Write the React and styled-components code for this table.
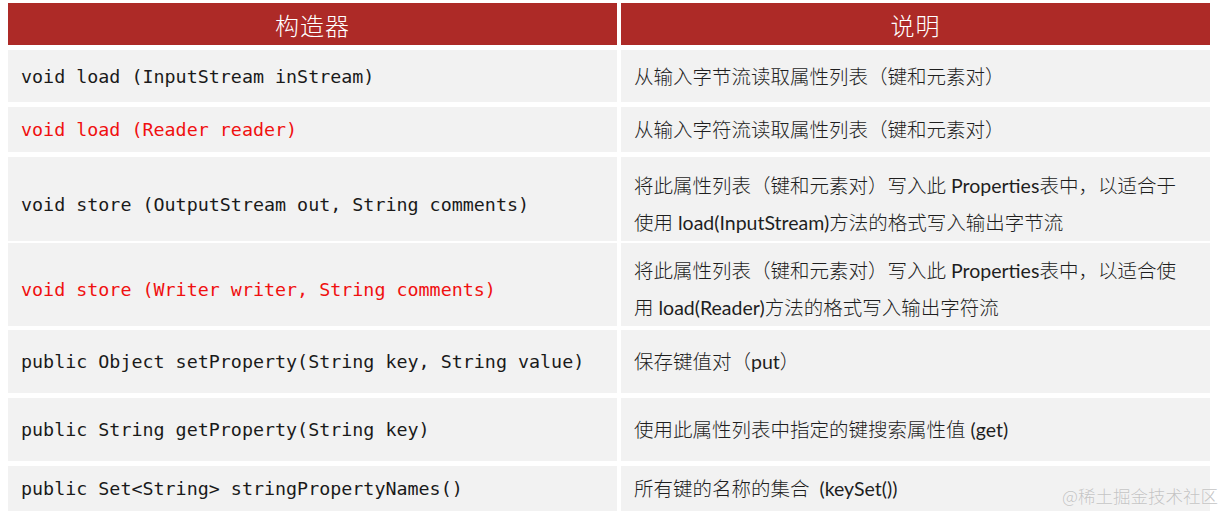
import React from "react";
import styled, { createGlobalStyle } from "styled-components";

const GlobalStyle = createGlobalStyle`
  html, body {
    margin: 0;
    padding: 0;
    background: #ffffff;
  }
  body {
    width: 1225px;
    height: 516px;
    overflow: hidden;
  }
`;

const Page = styled.div`
  position: relative;
  padding: 3px 0 0 8px;
  height: 516px;
  box-sizing: border-box;
`;

const Table = styled.div`
  display: flex;
  flex-direction: column;
  gap: 5px;
  width: 1202px;
`;

const Row = styled.div`
  display: grid;
  grid-template-columns: 609px 589px;
  column-gap: 4px;
  height: ${(p) => p.$h}px;
`;

const HeadCell = styled.div`
  display: flex;
  align-items: center;
  justify-content: center;
  background: #ad2a27;
  color: #ffffff;
  font-family: "Noto Sans CJK SC", sans-serif;
  font-size: 24px;
  font-weight: 300;
  letter-spacing: 1px;
`;

const Cell = styled.div`
  display: flex;
  align-items: center;
  background: #f2f2f2;
  padding: ${(p) => p.$shift || 0}px 0 0 13px;
  box-sizing: border-box;
`;

const Code = styled.span`
  font-family: "DejaVu Sans Mono", "Liberation Mono", monospace;
  font-size: 18.35px;
  color: ${(p) => (p.$red ? "#f01010" : "#1a1a1a")};
  white-space: pre;
`;

const Desc = styled.span`
  font-family: Lato, "Noto Sans CJK SC", sans-serif;
  font-size: 19.5px;
  font-weight: 300;
  line-height: 37px;
  color: #1e1e1e;
  white-space: pre;
`;

const Latin = styled.span`
  font-weight: 400;
`;

const Watermark = styled.div`
  position: absolute;
  right: 7px;
  bottom: 8px;
  font-family: "Noto Sans CJK SC", sans-serif;
  font-size: 17.5px;
  font-weight: 300;
  color: #c4c4c4;
  text-shadow: 0 0 1px #ffffff;
`;

const rows = [
  { h: 52, code: "void load (InputStream inStream)", desc: ["从输入字节流读取属性列表（键和元素对）"] },
  { h: 45, red: true, code: "void load (Reader reader)", desc: ["从输入字符流读取属性列表（键和元素对）"] },
  {
    h: 81,
    shift: 10,
    code: "void store (OutputStream out, String comments)",
    desc: ["将此属性列表（键和元素对）写入此 Properties表中，以适合于", "使用 load(InputStream)方法的格式写入输出字节流"],
  },
  {
    h: 82,
    shift: 9,
    red: true,
    code: "void store (Writer writer, String comments)",
    desc: ["将此属性列表（键和元素对）写入此 Properties表中，以适合使", "用 load(Reader)方法的格式写入输出字符流"],
  },
  { h: 63, code: "public Object setProperty(String key, String value)", desc: ["保存键值对（put）"] },
  { h: 63, code: "public String getProperty(String key)", desc: ["使用此属性列表中指定的键搜索属性值 (get)"] },
  { h: 45, code: "public Set<String> stringPropertyNames()", desc: ["所有键的名称的集合  (keySet())"] },
];

// latin runs get the regular weight, like Calibri next to the light CJK face
function renderLine(line) {
  return line.split(/([\x20-\x7e]+)/).map((part, k) =>
    /^[\x20-\x7e]+$/.test(part) ? <Latin key={k}>{part}</Latin> : part
  );
}

export default function App() {
  return (
    <>
      <GlobalStyle />
      <Page>
        <Table>
          <Row $h={42}>
            <HeadCell>构造器</HeadCell>
            <HeadCell>说明</HeadCell>
          </Row>
          {rows.map((r, i) => (
            <Row key={i} $h={r.h}>
              <Cell $shift={r.shift}>
                <Code $red={r.red}>{r.code}</Code>
              </Cell>
              <Cell $shift={r.shift}>
                <Desc>
                  {r.desc.map((line, j) => (
                    <React.Fragment key={j}>
                      {j > 0 && <br />}
                      {renderLine(line)}
                    </React.Fragment>
                  ))}
                </Desc>
              </Cell>
            </Row>
          ))}
        </Table>
        <Watermark>@稀土掘金技术社区</Watermark>
      </Page>
    </>
  );
}
